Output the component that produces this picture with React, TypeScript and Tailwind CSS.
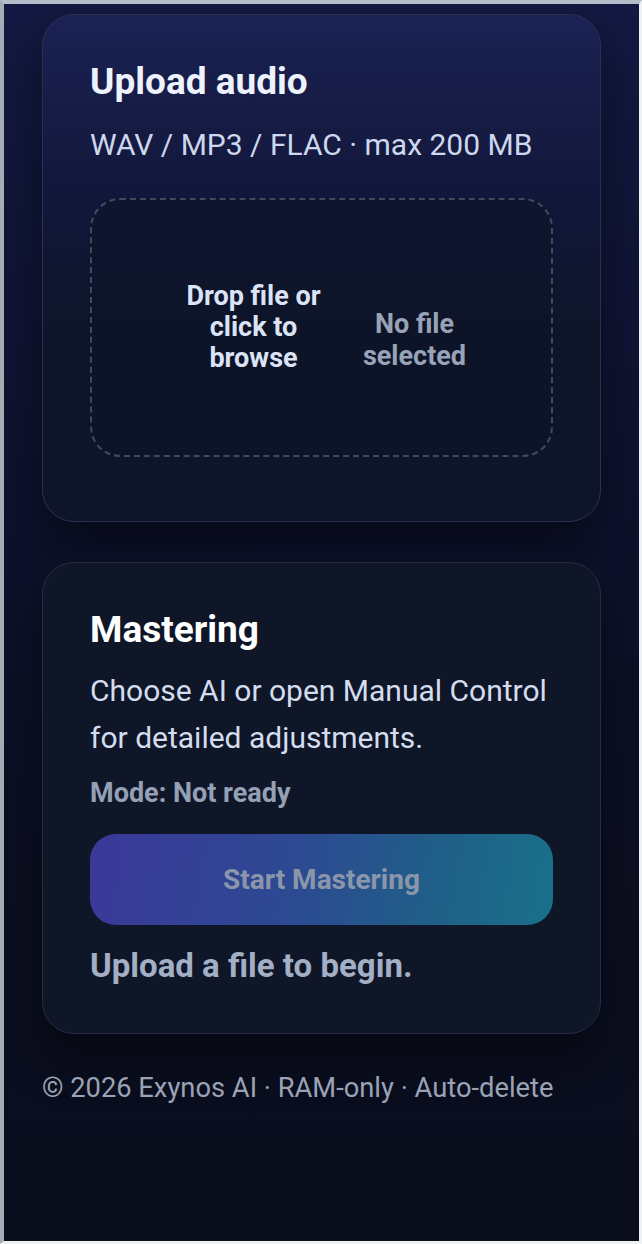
import React from "react";

export default function App() {
  return (
    <div
      className="h-[1244px] w-full overflow-hidden border-t-4 border-l-4 border-r-[3px] border-b-[3px] border-t-[#b3bcc8] border-l-[#a7abb3] border-r-[#eef0f3] border-b-[#eef0f3] bg-[linear-gradient(180deg,#131942_0%,#0e1330_35%,#0b0f22_65%,#0a0d1c_100%)]"
      style={{ fontFamily: "Roboto, 'Noto Sans', Arial, sans-serif" }}
    >
      <main className="flex flex-col px-[38px] pt-[10px]">
        {/* Upload card */}
        <section className="rounded-[32px] border border-[#2a3150] bg-[linear-gradient(180deg,#1c2254_0%,#161c45_18%,#11173a_36%,#0f1529_62%,#0f1528_100%)] px-[47px] pt-[44px] pb-[64px] shadow-[0_24px_48px_rgba(0,0,0,0.45)]">
          <h2 className="text-[37px] font-bold leading-[45px] text-[#eef2fd]">Upload audio</h2>
          <p className="mt-[21px] text-[30px] leading-[40px] text-[#cdd7ee]">
            WAV / MP3 / FLAC · max 200 MB
          </p>
          <div className="mt-[33px] flex h-[259px] items-center justify-center gap-[26px] rounded-[30px] border-[2.5px] border-dashed border-[#404a5f] bg-[#0e1428]/60 pl-[10px]">
            <div className="w-[150px] text-center text-[27px] font-bold leading-[31px] text-[#dbe3f7]">
              Drop file or click to browse
            </div>
            <div className="mt-[24px] w-[120px] text-center text-[27px] font-bold leading-[32px] text-[#98a3b7]">
              No file selected
            </div>
          </div>
        </section>

        {/* Mastering card */}
        <section className="mt-[40px] rounded-[32px] border border-[#262d42] bg-[#0f1628] px-[47px] pt-[44px] pb-[46px] shadow-[0_24px_48px_rgba(0,0,0,0.45)]">
          <h2 className="text-[37px] font-bold leading-[45px] text-white">Mastering</h2>
          <p className="mt-[16px] text-[30px] leading-[46.5px] text-[#d4dcef]">
            Choose AI or open Manual Control for detailed adjustments.
          </p>
          <p className="mt-[14px] text-[27px] font-bold leading-[36px] text-[#94a0b5]">Mode: Not ready</p>
          <button
            type="button"
            disabled
            className="mt-[23px] flex h-[91px] w-full items-center justify-center rounded-[26px] bg-[linear-gradient(100deg,#3b3899_0%,#2c4a92_45%,#1f6088_75%,#19718a_100%)] text-[28px] font-bold text-[#8c96aa]"
          >
            Start Mastering
          </button>
          <p className="mt-[20px] text-[33px] font-bold leading-[42px] text-[#a2afc4]">Upload a file to begin.</p>
        </section>

        <footer className="mt-[36px] text-[27.3px] leading-[36px] text-[#9aa3b6]">
          © 2026 Exynos AI · RAM-only · Auto-delete
        </footer>
      </main>
    </div>
  );
}
